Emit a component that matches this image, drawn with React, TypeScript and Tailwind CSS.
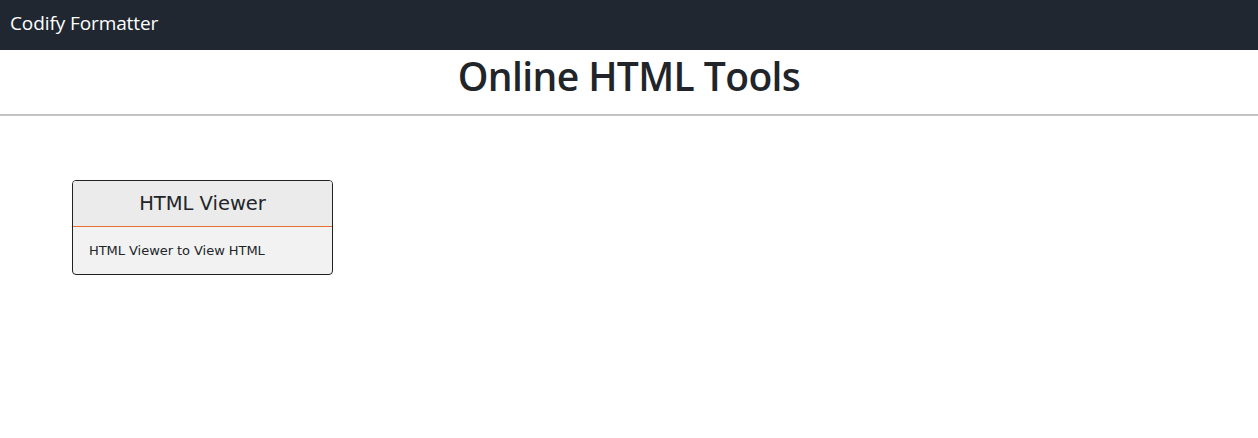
export default function App() {
  return (
    <div className="min-h-[438px] bg-white" style={{ fontFamily: '"Open Sans", "Noto Sans", sans-serif' }}>
      <nav className="h-[50px] bg-[#212731] flex items-center px-[10px] pb-[4px]">
        <span className="text-white text-[19px] tracking-[-0.1px]">Codify Formatter</span>
      </nav>
      <div className="border-b-2 border-[#c4c4c4] h-[66px] flex items-center justify-center">
        <h1 className="text-[39px] font-semibold text-[#212529] leading-none tracking-[-0.6px] pb-[14px]">Online HTML Tools</h1>
      </div>
      <div className="pl-[72px] pt-[64px]">
        <div className="w-[261px] border border-[#222] rounded-[4px] overflow-hidden bg-[#f2f2f2]" style={{ fontFamily: '"DejaVu Sans", Verdana, sans-serif' }}>
          <div className="h-[46px] bg-[#ebebeb] border-b border-[#e86f2e] flex items-center justify-center">
            <span className="text-[19.5px] text-[#212529]">HTML Viewer</span>
          </div>
          <div className="h-[47px] px-[16px] flex items-center pt-[1px]">
            <span className="text-[13px] text-[#212529] tracking-[-0.05px]">HTML Viewer to View HTML</span>
          </div>
        </div>
      </div>
    </div>
  );
}
